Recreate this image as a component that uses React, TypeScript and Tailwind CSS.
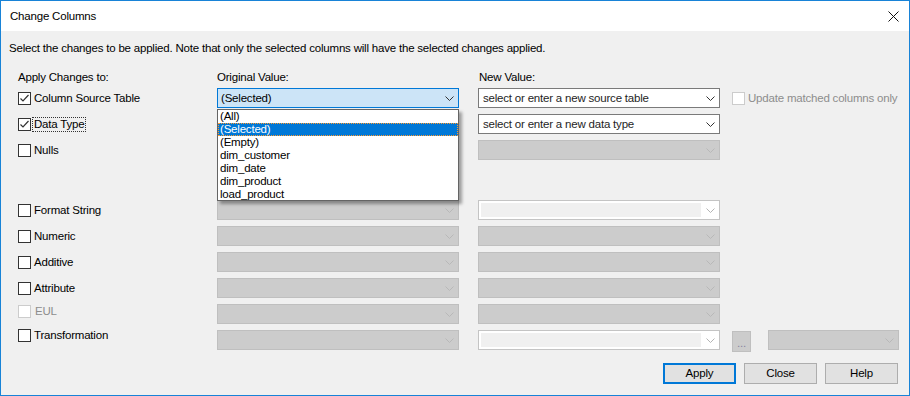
import React from "react";

type Variant = "focused" | "normal" | "disabled" | "editable";

function Chevron({ color }: { color: string }) {
  return (
    <svg width="9" height="5" viewBox="0 0 9 5" className="shrink-0">
      <polyline points="0.5,0.5 4.5,4.5 8.5,0.5" fill="none" stroke={color} strokeWidth="1" />
    </svg>
  );
}

function Combo({ variant, text, w }: { variant: Variant; text?: string; w: string }) {
  if (variant === "focused") {
    return (
      <div className={`${w} h-[20px] shrink-0 border border-[#0078d7] bg-[#cce4f7] flex items-center pl-[3px] pr-[4px]`}>
        <span className="flex-1 text-black">{text}</span>
        <Chevron color="#333333" />
      </div>
    );
  }
  if (variant === "normal") {
    return (
      <div className={`${w} h-[20px] shrink-0 border border-[#7a7a7a] bg-white flex items-center pl-[4px] pr-[4px]`}>
        <span className="flex-1 text-[#1e1e1e]">{text}</span>
        <Chevron color="#333333" />
      </div>
    );
  }
  if (variant === "editable") {
    return (
      <div className={`${w} h-[20px] shrink-0 border border-[#c4c4c4] bg-white flex items-center pl-[2px] pr-[4px]`}>
        <div className="w-[220px] h-[14px] bg-[#f0f0f0]" />
        <div className="flex-1" />
        <Chevron color="#b4b4b4" />
      </div>
    );
  }
  return (
    <div className={`${w} h-[20px] shrink-0 border border-[#bfbfbf] bg-[#cccccc] flex items-center justify-end pr-[4px]`}>
      <Chevron color="#b8b8b8" />
    </div>
  );
}

function Check({ checked, disabled }: { checked?: boolean; disabled?: boolean }) {
  return (
    <div
      className={`w-[13px] h-[13px] shrink-0 border bg-white flex items-center justify-center ${
        disabled ? "border-[#cccccc]" : "border-[#333333]"
      }`}
    >
      {checked && (
        <svg width="11" height="11" viewBox="0 0 11 11">
          <polyline points="1.5,5.5 4,8 9.5,2" fill="none" stroke="#333333" strokeWidth="1.2" />
        </svg>
      )}
    </div>
  );
}

function LeftCell({ label, checked, disabled, focus }: { label: string; checked?: boolean; disabled?: boolean; focus?: boolean }) {
  return (
    <div className="w-[199px] shrink-0 flex items-center gap-[3px]">
      <Check checked={checked} disabled={disabled} />
      {focus ? (
        <span className="border border-dotted border-[#333] px-[1px] leading-[13px] -ml-[2px] text-black">{label}</span>
      ) : (
        <span className={disabled ? "text-[#8d8d8d] ml-[1px]" : "text-black"}>{label}</span>
      )}
    </div>
  );
}

const items = ["(All)", "(Selected)", "(Empty)", "dim_customer", "dim_date", "dim_product", "load_product"];

export default function App() {
  return (
    <div
      className="relative w-[910px] h-[396px] border border-[#1883d7] bg-[#f0f0f0] flex flex-col text-[11.5px] tracking-[-0.2px] leading-[15px] text-black whitespace-nowrap"
      style={{ fontFamily: '"Liberation Sans", Arial, sans-serif' }}
    >
      {/* Title bar */}
      <div className="h-[30px] bg-white flex items-center justify-between pl-[9px] pr-[10px] shrink-0">
        <span className="text-black">Change Columns</span>
        <svg width="11" height="11" viewBox="0 0 11 11">
          <line x1="0.5" y1="0.5" x2="10.5" y2="10.5" stroke="#111" strokeWidth="1" />
          <line x1="10.5" y1="0.5" x2="0.5" y2="10.5" stroke="#111" strokeWidth="1" />
        </svg>
      </div>

      {/* Body */}
      <div className="flex flex-col flex-1">
        <p className="mt-[10px] ml-[8px] h-[15px]">
          Select the changes to be applied. Note that only the selected columns will have the selected changes applied.
        </p>

        <div className="mt-[14px] ml-[17px] flex h-[15px]">
          <span className="w-[199px]">Apply Changes to:</span>
          <span className="w-[262px]">Original Value:</span>
          <span>New Value:</span>
        </div>

        <div className="mt-[3px] ml-[17px] flex flex-col gap-[6px]">
          <div className="flex items-center h-[20px]">
            <LeftCell label="Column Source Table" checked />
            <Combo variant="focused" text="(Selected)" w="w-[242px]" />
            <div className="w-[19px] shrink-0" />
            <Combo variant="normal" text="select or enter a new source table" w="w-[242px]" />
            <div className="ml-[12px] flex items-center gap-[3px]">
              <Check disabled />
              <span className="text-[#8d8d8d]">Update matched columns only</span>
            </div>
          </div>

          <div className="flex items-center h-[20px]">
            <LeftCell label="Data Type" checked focus />
            <div className="w-[242px] shrink-0" />
            <div className="w-[19px] shrink-0" />
            <Combo variant="normal" text="select or enter a new data type" w="w-[242px]" />
          </div>

          <div className="flex items-center h-[20px]">
            <LeftCell label="Nulls" />
            <div className="w-[242px] shrink-0" />
            <div className="w-[19px] shrink-0" />
            <Combo variant="disabled" w="w-[242px]" />
          </div>

          <div className="flex items-center h-[20px] mt-[34px]">
            <LeftCell label="Format String" />
            <Combo variant="disabled" w="w-[242px]" />
            <div className="w-[19px] shrink-0" />
            <Combo variant="editable" w="w-[242px]" />
          </div>

          <div className="flex items-center h-[20px]">
            <LeftCell label="Numeric" />
            <Combo variant="disabled" w="w-[242px]" />
            <div className="w-[19px] shrink-0" />
            <Combo variant="disabled" w="w-[242px]" />
          </div>

          <div className="flex items-center h-[20px]">
            <LeftCell label="Additive" />
            <Combo variant="disabled" w="w-[242px]" />
            <div className="w-[19px] shrink-0" />
            <Combo variant="disabled" w="w-[242px]" />
          </div>

          <div className="flex items-center h-[20px]">
            <LeftCell label="Attribute" />
            <Combo variant="disabled" w="w-[242px]" />
            <div className="w-[19px] shrink-0" />
            <Combo variant="disabled" w="w-[242px]" />
          </div>

          <div className="flex items-center h-[20px]">
            <div className="-mt-[5px]">
              <LeftCell label="EUL" disabled />
            </div>
            <Combo variant="disabled" w="w-[242px]" />
            <div className="w-[19px] shrink-0" />
            <Combo variant="disabled" w="w-[242px]" />
          </div>

          <div className="flex items-center h-[20px]">
            <div className="-mt-[10px]">
              <LeftCell label="Transformation" />
            </div>
            <Combo variant="disabled" w="w-[242px]" />
            <div className="w-[19px] shrink-0" />
            <Combo variant="editable" w="w-[242px]" />
            <div className="ml-[12px] w-[19px] h-[21px] border border-[#bfbfbf] bg-[#cccccc] flex items-end justify-center pb-[3px] text-[#8a83a0] leading-[10px] mt-[2px]">
              ...
            </div>
            <div className="ml-[17px]">
              <Combo variant="disabled" w="w-[131px]" />
            </div>
          </div>
        </div>

        <div className="mt-[13px] flex justify-end gap-[8px] pr-[11px]">
          <button className="w-[73px] h-[21px] border-2 border-[#0078d7] bg-[#e1e1e1] text-black leading-[15px]">Apply</button>
          <button className="w-[73px] h-[21px] border border-[#adadad] bg-[#e1e1e1] text-black leading-[15px]">Close</button>
          <button className="w-[73px] h-[21px] border border-[#adadad] bg-[#e1e1e1] text-black leading-[15px]">Help</button>
        </div>
      </div>

      {/* Dropdown list overlay */}
      <div className="absolute left-[216px] top-[108px] w-[242px] h-[92px] border border-[#646464] bg-white shadow-[3px_3px_3px_rgba(0,0,0,0.35)] z-10 flex flex-col">
        {items.map((it) =>
          it === "(Selected)" ? (
            <div key={it} className="h-[13px] leading-[11px] bg-[#0078d7] text-white pl-[1px] border border-dotted border-[#ff9a2e]">
              {it}
            </div>
          ) : (
            <div key={it} className="h-[13px] leading-[13px] pl-[2px] text-black">
              {it}
            </div>
          )
        )}
      </div>
    </div>
  );
}
